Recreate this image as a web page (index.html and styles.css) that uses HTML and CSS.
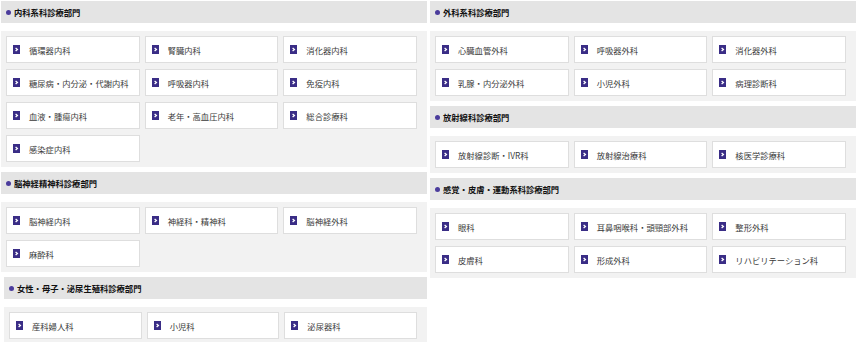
FILE: index.html
```html
<!DOCTYPE html>
<html lang="ja">
<head>
<meta charset="utf-8">
<title>診療部門</title>
<link rel="stylesheet" href="styles.css">
</head>
<body>
<div class="layout">
  <div class="col">
    <section class="dept">
      <h2 class="dept-title">内科系科診療部門</h2>
      <ul class="dept-list">
        <li class="card"><svg class="ico" viewBox="0 0 7 9"><rect width="7" height="9"/><polyline points="2.6,3 4.4,4.5 2.6,6"/></svg>循環器内科</li>
        <li class="card"><svg class="ico" viewBox="0 0 7 9"><rect width="7" height="9"/><polyline points="2.6,3 4.4,4.5 2.6,6"/></svg>腎臓内科</li>
        <li class="card"><svg class="ico" viewBox="0 0 7 9"><rect width="7" height="9"/><polyline points="2.6,3 4.4,4.5 2.6,6"/></svg>消化器内科</li>
        <li class="card"><svg class="ico" viewBox="0 0 7 9"><rect width="7" height="9"/><polyline points="2.6,3 4.4,4.5 2.6,6"/></svg>糖尿病・内分泌・代謝内科</li>
        <li class="card"><svg class="ico" viewBox="0 0 7 9"><rect width="7" height="9"/><polyline points="2.6,3 4.4,4.5 2.6,6"/></svg>呼吸器内科</li>
        <li class="card"><svg class="ico" viewBox="0 0 7 9"><rect width="7" height="9"/><polyline points="2.6,3 4.4,4.5 2.6,6"/></svg>免疫内科</li>
        <li class="card"><svg class="ico" viewBox="0 0 7 9"><rect width="7" height="9"/><polyline points="2.6,3 4.4,4.5 2.6,6"/></svg>血液・腫瘍内科</li>
        <li class="card"><svg class="ico" viewBox="0 0 7 9"><rect width="7" height="9"/><polyline points="2.6,3 4.4,4.5 2.6,6"/></svg>老年・高血圧内科</li>
        <li class="card"><svg class="ico" viewBox="0 0 7 9"><rect width="7" height="9"/><polyline points="2.6,3 4.4,4.5 2.6,6"/></svg>総合診療科</li>
        <li class="card"><svg class="ico" viewBox="0 0 7 9"><rect width="7" height="9"/><polyline points="2.6,3 4.4,4.5 2.6,6"/></svg>感染症内科</li>
      </ul>
    </section>
    <section class="dept">
      <h2 class="dept-title">脳神経精神科診療部門</h2>
      <ul class="dept-list">
        <li class="card"><svg class="ico" viewBox="0 0 7 9"><rect width="7" height="9"/><polyline points="2.6,3 4.4,4.5 2.6,6"/></svg>脳神経内科</li>
        <li class="card"><svg class="ico" viewBox="0 0 7 9"><rect width="7" height="9"/><polyline points="2.6,3 4.4,4.5 2.6,6"/></svg>神経科・精神科</li>
        <li class="card"><svg class="ico" viewBox="0 0 7 9"><rect width="7" height="9"/><polyline points="2.6,3 4.4,4.5 2.6,6"/></svg>脳神経外科</li>
        <li class="card"><svg class="ico" viewBox="0 0 7 9"><rect width="7" height="9"/><polyline points="2.6,3 4.4,4.5 2.6,6"/></svg>麻酔科</li>
      </ul>
    </section>
    <section class="dept dept-shift">
      <h2 class="dept-title">女性・母子・泌尿生殖科診療部門</h2>
      <ul class="dept-list">
        <li class="card"><svg class="ico" viewBox="0 0 7 9"><rect width="7" height="9"/><polyline points="2.6,3 4.4,4.5 2.6,6"/></svg>産科婦人科</li>
        <li class="card"><svg class="ico" viewBox="0 0 7 9"><rect width="7" height="9"/><polyline points="2.6,3 4.4,4.5 2.6,6"/></svg>小児科</li>
        <li class="card"><svg class="ico" viewBox="0 0 7 9"><rect width="7" height="9"/><polyline points="2.6,3 4.4,4.5 2.6,6"/></svg>泌尿器科</li>
      </ul>
    </section>
  </div>
  <div class="col">
    <section class="dept">
      <h2 class="dept-title">外科系科診療部門</h2>
      <ul class="dept-list">
        <li class="card"><svg class="ico" viewBox="0 0 7 9"><rect width="7" height="9"/><polyline points="2.6,3 4.4,4.5 2.6,6"/></svg>心臓血管外科</li>
        <li class="card"><svg class="ico" viewBox="0 0 7 9"><rect width="7" height="9"/><polyline points="2.6,3 4.4,4.5 2.6,6"/></svg>呼吸器外科</li>
        <li class="card"><svg class="ico" viewBox="0 0 7 9"><rect width="7" height="9"/><polyline points="2.6,3 4.4,4.5 2.6,6"/></svg>消化器外科</li>
        <li class="card"><svg class="ico" viewBox="0 0 7 9"><rect width="7" height="9"/><polyline points="2.6,3 4.4,4.5 2.6,6"/></svg>乳腺・内分泌外科</li>
        <li class="card"><svg class="ico" viewBox="0 0 7 9"><rect width="7" height="9"/><polyline points="2.6,3 4.4,4.5 2.6,6"/></svg>小児外科</li>
        <li class="card"><svg class="ico" viewBox="0 0 7 9"><rect width="7" height="9"/><polyline points="2.6,3 4.4,4.5 2.6,6"/></svg>病理診断科</li>
      </ul>
    </section>
    <section class="dept">
      <h2 class="dept-title">放射線科診療部門</h2>
      <ul class="dept-list">
        <li class="card"><svg class="ico" viewBox="0 0 7 9"><rect width="7" height="9"/><polyline points="2.6,3 4.4,4.5 2.6,6"/></svg>放射線診断・IVR科</li>
        <li class="card"><svg class="ico" viewBox="0 0 7 9"><rect width="7" height="9"/><polyline points="2.6,3 4.4,4.5 2.6,6"/></svg>放射線治療科</li>
        <li class="card"><svg class="ico" viewBox="0 0 7 9"><rect width="7" height="9"/><polyline points="2.6,3 4.4,4.5 2.6,6"/></svg>核医学診療科</li>
      </ul>
    </section>
    <section class="dept">
      <h2 class="dept-title">感覚・皮膚・運動系科診療部門</h2>
      <ul class="dept-list">
        <li class="card"><svg class="ico" viewBox="0 0 7 9"><rect width="7" height="9"/><polyline points="2.6,3 4.4,4.5 2.6,6"/></svg>眼科</li>
        <li class="card"><svg class="ico" viewBox="0 0 7 9"><rect width="7" height="9"/><polyline points="2.6,3 4.4,4.5 2.6,6"/></svg>耳鼻咽喉科・頭頸部外科</li>
        <li class="card"><svg class="ico" viewBox="0 0 7 9"><rect width="7" height="9"/><polyline points="2.6,3 4.4,4.5 2.6,6"/></svg>整形外科</li>
        <li class="card"><svg class="ico" viewBox="0 0 7 9"><rect width="7" height="9"/><polyline points="2.6,3 4.4,4.5 2.6,6"/></svg>皮膚科</li>
        <li class="card"><svg class="ico" viewBox="0 0 7 9"><rect width="7" height="9"/><polyline points="2.6,3 4.4,4.5 2.6,6"/></svg>形成外科</li>
        <li class="card"><svg class="ico" viewBox="0 0 7 9"><rect width="7" height="9"/><polyline points="2.6,3 4.4,4.5 2.6,6"/></svg>リハビリテーション科</li>
      </ul>
    </section>
  </div>
</div>
</body>
</html>
```

FILE: styles.css
```css
* { box-sizing: border-box; }

html, body {
  margin: 0;
  padding: 0;
  background: #ffffff;
}

body {
  font-family: "Noto Sans CJK JP", "Noto Sans", sans-serif;
  font-size: 8.3px;
  color: #3a3a3a;
  overflow: hidden;
}

.layout {
  display: grid;
  grid-template-columns: 426px 426px;
  column-gap: 3px;
  align-items: start;
  padding: 1px 0 0 1px;
}

.col {
  display: flex;
  flex-direction: column;
  gap: 5px;
}

.dept-shift {
  margin-left: 3px;
}

.dept-title {
  margin: 0 0 8px 0;
  height: 22px;
  background: #e4e4e4;
  display: flex;
  align-items: center;
  padding-left: 5px;
  gap: 2px;
  font-size: 8.3px;
  font-weight: 700;
  color: #111111;
}

.dept-title::before {
  content: "";
  width: 5px;
  height: 5px;
  border-radius: 50%;
  background: #4b3c9c;
  margin-right: 1px;
}

.dept-list {
  list-style: none;
  margin: 0;
  padding: 5px 10px 5px 5px;
  background: #f2f2f2;
  display: grid;
  grid-template-columns: repeat(3, 1fr);
  column-gap: 5px;
  row-gap: 6px;
}

.card {
  height: 27px;
  background: #ffffff;
  border: 1px solid #dedede;
  display: flex;
  align-items: center;
  padding-left: 6px;
  gap: 9px;
  white-space: nowrap;
}

.ico {
  width: 7px;
  height: 9px;
  flex: none;
}

.ico rect {
  fill: #3a2d86;
}

.ico polyline {
  fill: none;
  stroke: #ffffff;
  stroke-width: 1.3;
}
```
